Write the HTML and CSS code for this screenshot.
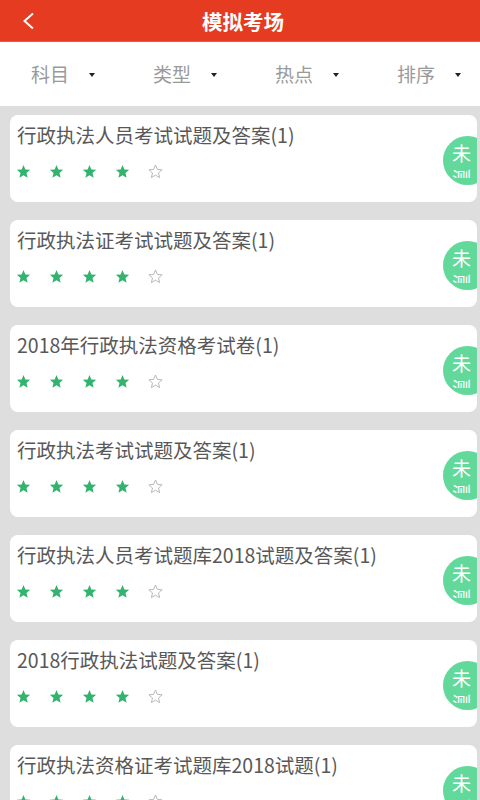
FILE: index.html
```html
<!DOCTYPE html>
<html lang="zh-CN">
<head>
<meta charset="utf-8">
<title>模拟考场</title>
<link rel="stylesheet" href="styles.css">
</head>
<body>
<header class="topbar">
  <div class="back">
    <svg width="14" height="18" viewBox="0 0 14 18"><polyline points="11,1.5 2.5,9 11,16.5" fill="none" stroke="#fff" stroke-width="2"/></svg>
  </div>
  <h1 class="title">模拟考场</h1>
  <div class="spacer"></div>
</header>
<nav class="filters">
  <div class="filter"><span>科目</span><i class="caret"></i></div>
  <div class="filter"><span>类型</span><i class="caret"></i></div>
  <div class="filter"><span>热点</span><i class="caret"></i></div>
  <div class="filter"><span>排序</span><i class="caret"></i></div>
</nav>
<main class="list">
  <section class="card">
    <div class="card-title">行政执法人员考试试题及答案(1)</div>
    <div class="stars"><svg class="star on" viewBox="0 0 24 24"><polygon points="12,1.5 15,8.6 22.6,9.3 16.8,14.3 18.6,21.8 12,17.8 5.4,21.8 7.2,14.3 1.4,9.3 9,8.6"/></svg><svg class="star on" viewBox="0 0 24 24"><polygon points="12,1.5 15,8.6 22.6,9.3 16.8,14.3 18.6,21.8 12,17.8 5.4,21.8 7.2,14.3 1.4,9.3 9,8.6"/></svg><svg class="star on" viewBox="0 0 24 24"><polygon points="12,1.5 15,8.6 22.6,9.3 16.8,14.3 18.6,21.8 12,17.8 5.4,21.8 7.2,14.3 1.4,9.3 9,8.6"/></svg><svg class="star on" viewBox="0 0 24 24"><polygon points="12,1.5 15,8.6 22.6,9.3 16.8,14.3 18.6,21.8 12,17.8 5.4,21.8 7.2,14.3 1.4,9.3 9,8.6"/></svg><svg class="star off" viewBox="0 0 24 24"><polygon points="12,1.5 15,8.6 22.6,9.3 16.8,14.3 18.6,21.8 12,17.8 5.4,21.8 7.2,14.3 1.4,9.3 9,8.6"/></svg></div>
    <div class="badge"><div class="badge-text">未<br>测</div></div>
  </section>
  <section class="card">
    <div class="card-title">行政执法证考试试题及答案(1)</div>
    <div class="stars"><svg class="star on" viewBox="0 0 24 24"><polygon points="12,1.5 15,8.6 22.6,9.3 16.8,14.3 18.6,21.8 12,17.8 5.4,21.8 7.2,14.3 1.4,9.3 9,8.6"/></svg><svg class="star on" viewBox="0 0 24 24"><polygon points="12,1.5 15,8.6 22.6,9.3 16.8,14.3 18.6,21.8 12,17.8 5.4,21.8 7.2,14.3 1.4,9.3 9,8.6"/></svg><svg class="star on" viewBox="0 0 24 24"><polygon points="12,1.5 15,8.6 22.6,9.3 16.8,14.3 18.6,21.8 12,17.8 5.4,21.8 7.2,14.3 1.4,9.3 9,8.6"/></svg><svg class="star on" viewBox="0 0 24 24"><polygon points="12,1.5 15,8.6 22.6,9.3 16.8,14.3 18.6,21.8 12,17.8 5.4,21.8 7.2,14.3 1.4,9.3 9,8.6"/></svg><svg class="star off" viewBox="0 0 24 24"><polygon points="12,1.5 15,8.6 22.6,9.3 16.8,14.3 18.6,21.8 12,17.8 5.4,21.8 7.2,14.3 1.4,9.3 9,8.6"/></svg></div>
    <div class="badge"><div class="badge-text">未<br>测</div></div>
  </section>
  <section class="card">
    <div class="card-title">2018年行政执法资格考试卷(1)</div>
    <div class="stars"><svg class="star on" viewBox="0 0 24 24"><polygon points="12,1.5 15,8.6 22.6,9.3 16.8,14.3 18.6,21.8 12,17.8 5.4,21.8 7.2,14.3 1.4,9.3 9,8.6"/></svg><svg class="star on" viewBox="0 0 24 24"><polygon points="12,1.5 15,8.6 22.6,9.3 16.8,14.3 18.6,21.8 12,17.8 5.4,21.8 7.2,14.3 1.4,9.3 9,8.6"/></svg><svg class="star on" viewBox="0 0 24 24"><polygon points="12,1.5 15,8.6 22.6,9.3 16.8,14.3 18.6,21.8 12,17.8 5.4,21.8 7.2,14.3 1.4,9.3 9,8.6"/></svg><svg class="star on" viewBox="0 0 24 24"><polygon points="12,1.5 15,8.6 22.6,9.3 16.8,14.3 18.6,21.8 12,17.8 5.4,21.8 7.2,14.3 1.4,9.3 9,8.6"/></svg><svg class="star off" viewBox="0 0 24 24"><polygon points="12,1.5 15,8.6 22.6,9.3 16.8,14.3 18.6,21.8 12,17.8 5.4,21.8 7.2,14.3 1.4,9.3 9,8.6"/></svg></div>
    <div class="badge"><div class="badge-text">未<br>测</div></div>
  </section>
  <section class="card">
    <div class="card-title">行政执法考试试题及答案(1)</div>
    <div class="stars"><svg class="star on" viewBox="0 0 24 24"><polygon points="12,1.5 15,8.6 22.6,9.3 16.8,14.3 18.6,21.8 12,17.8 5.4,21.8 7.2,14.3 1.4,9.3 9,8.6"/></svg><svg class="star on" viewBox="0 0 24 24"><polygon points="12,1.5 15,8.6 22.6,9.3 16.8,14.3 18.6,21.8 12,17.8 5.4,21.8 7.2,14.3 1.4,9.3 9,8.6"/></svg><svg class="star on" viewBox="0 0 24 24"><polygon points="12,1.5 15,8.6 22.6,9.3 16.8,14.3 18.6,21.8 12,17.8 5.4,21.8 7.2,14.3 1.4,9.3 9,8.6"/></svg><svg class="star on" viewBox="0 0 24 24"><polygon points="12,1.5 15,8.6 22.6,9.3 16.8,14.3 18.6,21.8 12,17.8 5.4,21.8 7.2,14.3 1.4,9.3 9,8.6"/></svg><svg class="star off" viewBox="0 0 24 24"><polygon points="12,1.5 15,8.6 22.6,9.3 16.8,14.3 18.6,21.8 12,17.8 5.4,21.8 7.2,14.3 1.4,9.3 9,8.6"/></svg></div>
    <div class="badge"><div class="badge-text">未<br>测</div></div>
  </section>
  <section class="card">
    <div class="card-title">行政执法人员考试题库2018试题及答案(1)</div>
    <div class="stars"><svg class="star on" viewBox="0 0 24 24"><polygon points="12,1.5 15,8.6 22.6,9.3 16.8,14.3 18.6,21.8 12,17.8 5.4,21.8 7.2,14.3 1.4,9.3 9,8.6"/></svg><svg class="star on" viewBox="0 0 24 24"><polygon points="12,1.5 15,8.6 22.6,9.3 16.8,14.3 18.6,21.8 12,17.8 5.4,21.8 7.2,14.3 1.4,9.3 9,8.6"/></svg><svg class="star on" viewBox="0 0 24 24"><polygon points="12,1.5 15,8.6 22.6,9.3 16.8,14.3 18.6,21.8 12,17.8 5.4,21.8 7.2,14.3 1.4,9.3 9,8.6"/></svg><svg class="star on" viewBox="0 0 24 24"><polygon points="12,1.5 15,8.6 22.6,9.3 16.8,14.3 18.6,21.8 12,17.8 5.4,21.8 7.2,14.3 1.4,9.3 9,8.6"/></svg><svg class="star off" viewBox="0 0 24 24"><polygon points="12,1.5 15,8.6 22.6,9.3 16.8,14.3 18.6,21.8 12,17.8 5.4,21.8 7.2,14.3 1.4,9.3 9,8.6"/></svg></div>
    <div class="badge"><div class="badge-text">未<br>测</div></div>
  </section>
  <section class="card">
    <div class="card-title">2018行政执法试题及答案(1)</div>
    <div class="stars"><svg class="star on" viewBox="0 0 24 24"><polygon points="12,1.5 15,8.6 22.6,9.3 16.8,14.3 18.6,21.8 12,17.8 5.4,21.8 7.2,14.3 1.4,9.3 9,8.6"/></svg><svg class="star on" viewBox="0 0 24 24"><polygon points="12,1.5 15,8.6 22.6,9.3 16.8,14.3 18.6,21.8 12,17.8 5.4,21.8 7.2,14.3 1.4,9.3 9,8.6"/></svg><svg class="star on" viewBox="0 0 24 24"><polygon points="12,1.5 15,8.6 22.6,9.3 16.8,14.3 18.6,21.8 12,17.8 5.4,21.8 7.2,14.3 1.4,9.3 9,8.6"/></svg><svg class="star on" viewBox="0 0 24 24"><polygon points="12,1.5 15,8.6 22.6,9.3 16.8,14.3 18.6,21.8 12,17.8 5.4,21.8 7.2,14.3 1.4,9.3 9,8.6"/></svg><svg class="star off" viewBox="0 0 24 24"><polygon points="12,1.5 15,8.6 22.6,9.3 16.8,14.3 18.6,21.8 12,17.8 5.4,21.8 7.2,14.3 1.4,9.3 9,8.6"/></svg></div>
    <div class="badge"><div class="badge-text">未<br>测</div></div>
  </section>
  <section class="card">
    <div class="card-title">行政执法资格证考试题库2018试题(1)</div>
    <div class="stars"><svg class="star on" viewBox="0 0 24 24"><polygon points="12,1.5 15,8.6 22.6,9.3 16.8,14.3 18.6,21.8 12,17.8 5.4,21.8 7.2,14.3 1.4,9.3 9,8.6"/></svg><svg class="star on" viewBox="0 0 24 24"><polygon points="12,1.5 15,8.6 22.6,9.3 16.8,14.3 18.6,21.8 12,17.8 5.4,21.8 7.2,14.3 1.4,9.3 9,8.6"/></svg><svg class="star on" viewBox="0 0 24 24"><polygon points="12,1.5 15,8.6 22.6,9.3 16.8,14.3 18.6,21.8 12,17.8 5.4,21.8 7.2,14.3 1.4,9.3 9,8.6"/></svg><svg class="star on" viewBox="0 0 24 24"><polygon points="12,1.5 15,8.6 22.6,9.3 16.8,14.3 18.6,21.8 12,17.8 5.4,21.8 7.2,14.3 1.4,9.3 9,8.6"/></svg><svg class="star off" viewBox="0 0 24 24"><polygon points="12,1.5 15,8.6 22.6,9.3 16.8,14.3 18.6,21.8 12,17.8 5.4,21.8 7.2,14.3 1.4,9.3 9,8.6"/></svg></div>
    <div class="badge"><div class="badge-text">未<br>测</div></div>
  </section>
</main>
</body>
</html>
```
FILE: styles.css
```css
* { box-sizing: border-box; }
html, body {
  margin: 0;
  padding: 0;
}
body {
  width: 480px;
  height: 800px;
  overflow: hidden;
  background: #dedede;
  font-family: "Noto Sans CJK SC", "Noto Sans", sans-serif;
}
.topbar {
  height: 42px;
  background: #e53b20;
  display: grid;
  grid-template-columns: 60px 1fr 60px;
  align-items: center;
  border-bottom: 1px solid #ee5a40;
}
.back {
  padding-left: 22px;
  display: flex;
  align-items: center;
  height: 42px;
}
.back svg { display: block; margin-top: -1px; }
.title {
  margin: 0;
  text-align: center;
  color: #fff;
  font-size: 20.5px;
  font-weight: 700;
  line-height: 42px;
  padding-left: 6px;
}
.filters {
  height: 64px;
  background: #fff;
  display: grid;
  grid-template-columns: repeat(4, 122px);
  padding-left: 31px;
  align-items: center;
}
.filter {
  display: flex;
  align-items: center;
  gap: 20px;
  color: #9a9a9a;
  font-size: 19px;
  line-height: 24px;
}
.caret {
  width: 0;
  height: 0;
  border-left: 3.5px solid transparent;
  border-right: 3.5px solid transparent;
  border-top: 4px solid #222;
  margin-top: 1px;
}
.list {
  padding: 9px 3px 0 10px;
  display: flex;
  flex-direction: column;
  gap: 18px;
}
.card {
  position: relative;
  height: 87px;
  flex: none;
  background: #fff;
  border-radius: 8px;
  overflow: hidden;
  padding: 8px 0 0 7px;
}
.card-title {
  color: #585858;
  font-size: 19.5px;
  line-height: 24px;
  white-space: nowrap;
}
.stars {
  display: flex;
  gap: 18px;
  margin-top: 17px;
  margin-left: -1px;
}
.star {
  width: 15px;
  height: 15px;
  display: block;
}
.star.on polygon { fill: #34b36f; }
.star.off polygon { fill: none; stroke: #b8b8b8; stroke-width: 1.6; }
.badge {
  position: absolute;
  top: 21px;
  left: 433px;
  width: 49px;
  height: 49px;
  border-radius: 50%;
  background: #62d99b;
  padding: 4px 0 0 9px;
}
.badge-text {
  height: 38px;
  overflow: hidden;
  color: #fff;
  font-size: 19px;
  line-height: 25px;
}
```
